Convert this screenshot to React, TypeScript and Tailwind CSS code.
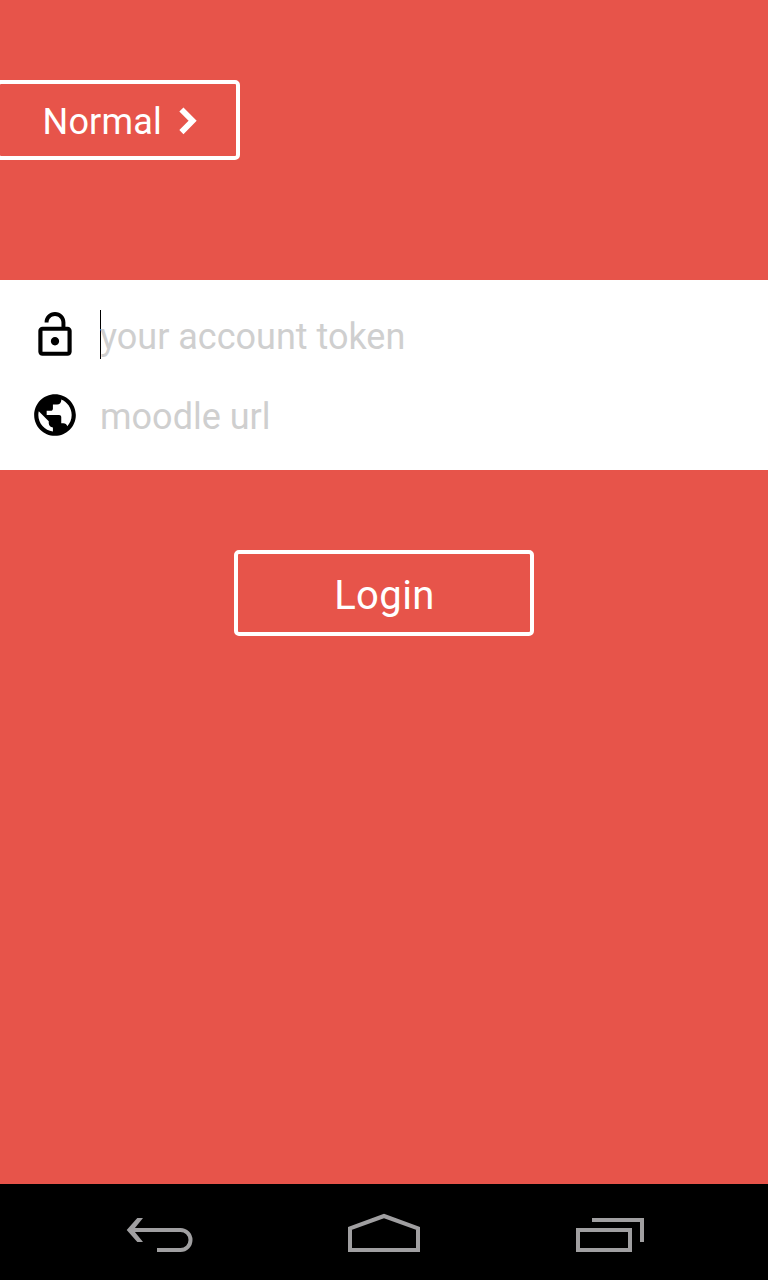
export default function App() {
  return (
    <div className="flex h-[1280px] w-[768px] flex-col overflow-hidden bg-[#e7544a] font-['Roboto','Noto_Sans',sans-serif]">
      <header className="flex h-[280px] pt-[80px]">
        <button className="-ml-1 flex h-[80px] w-[244px] items-center rounded-[5px] border-4 border-white pl-[42.5px] text-white">
          <span className="w-[120px] whitespace-nowrap pt-1 text-left text-[36px] leading-[42px] tracking-[0.2px]">Normal</span>
          <svg className="mt-px ml-[12.5px] shrink-0" width="24" height="32" viewBox="0 0 24 32" fill="none" stroke="currentColor" strokeWidth="5.8">
            <path d="M6.4 4.5 17.6 15.8 6.4 27.1" />
          </svg>
        </button>
      </header>

      <main className="flex flex-1 flex-col items-center">
        <form className="flex h-[190px] w-full flex-col bg-white pt-[15px] pl-[30px]">
          <label className="flex h-[80px] items-center">
            <svg width="50" height="50" viewBox="0 0 24 24" fill="#000">
              <path d="M12 17c1.1 0 2-.9 2-2s-.9-2-2-2-2 .9-2 2 .9 2 2 2zm6-9h-1V6c0-2.76-2.24-5-5-5S7 3.24 7 6h1.9c0-1.71 1.39-3.1 3.1-3.1 1.71 0 3.1 1.39 3.1 3.1v2H6c-1.1 0-2 .9-2 2v10c0 1.1.9 2 2 2h12c1.1 0 2-.9 2-2V10c0-1.1-.9-2-2-2zm0 12H6V10h12v10z" />
            </svg>
            <span className="mb-px ml-5 h-[49px] w-px bg-black" />
            <span className="-ml-px pt-[3px] text-[36px] leading-[42px] text-[#cfcfcf]">your account token</span>
          </label>
          <label className="flex h-[80px] items-center">
            <svg width="50" height="50" viewBox="0 0 24 24" fill="#000">
              <path d="M12 2C6.48 2 2 6.48 2 12s4.48 10 10 10 10-4.48 10-10S17.52 2 12 2zm-1 17.93c-3.95-.49-7-3.85-7-7.93 0-.62.08-1.21.21-1.79L9 15v1c0 1.1.9 2 2 2v1.93zm6.9-2.54c-.26-.81-1-1.39-1.9-1.39h-1v-3c0-.55-.45-1-1-1H8v-2h2c.55 0 1-.45 1-1V7h2c1.1 0 2-.9 2-2v-.41c2.93 1.19 5 4.06 5 7.41 0 2.08-.8 3.97-2.1 5.39z" />
            </svg>
            <span className="ml-5 pt-[3px] text-[36px] leading-[42px] text-[#cfcfcf]">moodle url</span>
          </label>
        </form>
        <button className="mt-[80px] flex h-[86px] w-[300px] items-center justify-center rounded-[5px] border-4 border-white pt-1.5 pl-px text-[40px] leading-[46px] tracking-[0.4px] text-white">
          Login
        </button>
      </main>

      <nav className="flex h-24 items-center justify-between bg-black px-[110px] pt-1.5 text-[#a09fa1]">
        <svg width="100" height="70" viewBox="0 0 100 70" fill="none" stroke="currentColor" strokeWidth="4">
          <path d="M20 30h50.5a10 10 0 0 1 0 20H47" />
          <path fill="currentColor" stroke="none" d="M27.3 18H33L23.3 30 33 42H27.3L16.7 30Z" />
        </svg>
        <svg width="100" height="70" viewBox="0 0 100 70" fill="none" stroke="currentColor" strokeWidth="4">
          <path d="M16 50V28.3L50 16 84 28.3V50Z" />
        </svg>
        <svg width="100" height="70" viewBox="0 0 100 70" fill="none" stroke="currentColor" strokeWidth="4">
          <path d="M20 30h52v20H20Z" />
          <path d="M34 20h50v22" />
        </svg>
      </nav>
    </div>
  );
}
